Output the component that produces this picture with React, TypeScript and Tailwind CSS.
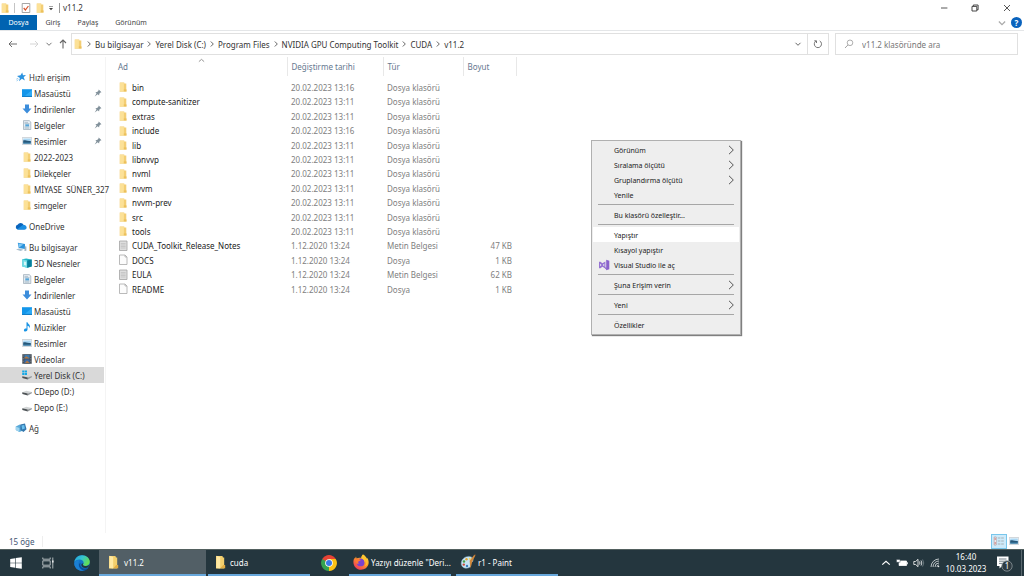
import React from "react";

type IconProps = { className?: string };

const Folder = ({ className = "h-2.5 w-2.5" }: IconProps) => (
  <svg viewBox="0 0 10 10" className={className} aria-hidden="true">
    <path d="M1.7.6h4.6v1H8.300v8H1.700z" fill="#f3ce74" />
    <path d="M2 .8h3.900v8.600H2z" fill="#fce197" />
    <path d="M5.800 7.400h2.700v2.200H5.800z" fill="#ecc05b" />
    <path d="M1.500 9.200h6.600v.4H1.500z" fill="#f5d98f" />
  </svg>
);

const BigFolder = ({ className = "h-[14px] w-3" }: IconProps) => (
  <svg viewBox="0 0 12 14" className={className} aria-hidden="true">
    <path d="M2 1h6.400l.6 1.400h1.200v11H2z" fill="#f3cf6d" />
    <path d="M2.600.7l3.600 1.200v11.600L2.200 13z" fill="#ffe9a3" />
    <path d="M9.200 10h2v3.200H6.400z" fill="#e3ae43" />
  </svg>
);

const TextFile = () => (
  <svg viewBox="0 0 10 12" className="h-3 w-2.5" aria-hidden="true">
    <path d="M1.500 1h7.500v9.500h-7.500z" fill="#dedede" stroke="#a3a3a3" strokeWidth=".8" />
    <path d="M2.800 3.500h4.800M2.800 5h4.800M2.800 6.500h4.800M2.800 8h4.800" stroke="#bdbdbd" strokeWidth=".7" />
  </svg>
);

const BlankFile = () => (
  <svg viewBox="0 0 10 12" className="h-3 w-2.5" aria-hidden="true">
    <path d="M1.500 1h5.500l2 2v7.500h-7.500z" fill="#fcfcfc" stroke="#a8a8a8" strokeWidth=".8" />
    <path d="M7 1v2h2" fill="none" stroke="#a8a8a8" strokeWidth=".7" />
  </svg>
);

const Star = () => (
  <svg viewBox="0 0 10 10" className="h-2.5 w-2.5" aria-hidden="true">
    <path d="M6.200.4l.8 2.800 3-.2-2.300 2.200 1.200 3.200-3-1.600L3 9.300l.9-3.400L1 3.900l3.500-.6z" fill="#2c93e0" />
    <path d="M.3 7.200l2-1M.7 9.200l1.600-1.800" stroke="#6bb6ea" strokeWidth=".7" />
  </svg>
);

const Desktop = () => (
  <svg viewBox="0 0 10 10" className="h-2.5 w-2.5" aria-hidden="true">
    <path d="M0 1.200h10v7.600H0z" fill="#1496ea" />
    <path d="M3 7.800L10 2v5.800z" fill="#2fabf5" />
    <path d="M0 8h10v.8H0z" fill="#0873bd" />
  </svg>
);

const Download = () => (
  <svg viewBox="0 0 10 10" className="h-2.5 w-2.5" aria-hidden="true">
    <path d="M3 .6h4v4h2.500L5 9.400.5 4.600H3z" fill="#3c8ddb" />
  </svg>
);

const Documents = () => (
  <svg viewBox="0 0 10 10" className="h-2.5 w-2.5" aria-hidden="true">
    <path d="M1.500.6h5.700L8.800 2v7.500H1.500z" fill="#e8eff4" stroke="#8a9ba7" strokeWidth=".6" />
    <path d="M2.500 2.400H6M2.500 3.600h5M2.500 7h4.800M2.500 8.200h4.800" stroke="#8fa8b8" strokeWidth=".6" />
    <path d="M3.300 4.300h3.800v2.100H3.300z" fill="#56a5d8" />
  </svg>
);

const Pictures = () => (
  <svg viewBox="0 0 10 10" className="h-2.5 w-2.5" aria-hidden="true">
    <path d="M.3 1.500h9.400v7H.3z" fill="#f7fafc" stroke="#a8b1b8" strokeWidth=".5" />
    <path d="M1.200 2.500h7.600v5H1.200z" fill="#a9d6f3" />
    <path d="M1.200 4.600c2-.8 3 .8 7.600.4v2.500H1.200z" fill="#275778" />
    <path d="M1.200 6.600h7.600v.9H1.200z" fill="#4189b5" />
  </svg>
);

const Cloud = () => (
  <svg viewBox="0 0 12 10" className="h-2.5 w-3" aria-hidden="true">
    <path d="M2.800 8.500A2.400 2.400 0 0 1 2.600 3.800 3.500 3.500 0 0 1 8.700 3.900a2.400 2.400 0 0 1 .8 4.600z" fill="#0a65bd" />
    <path d="M2.200 8.300l5.200-4c2-.8 4.300.5 4.200 2.400-.1 1-.8 1.800-2 1.800H2.900z" fill="#1b8fe3" />
  </svg>
);

const Computer = () => (
  <svg viewBox="0 0 12 10" className="h-2.5 w-3" aria-hidden="true">
    <path d="M2.800.8l7.200 1.300v5L3.700 6z" fill="#2b93dc" />
    <path d="M3.400 1.500l4.800.9-4 3.200z" fill="#80c8f4" />
    <path d="M1 7.400l3-.8 4.600 1.200-3 1.100z" fill="#a9bfce" />
    <path d="M9.800 4.200l1.600.3v4.300l-2 .3z" fill="#a0b4c2" />
  </svg>
);

const Cube = () => (
  <svg viewBox="0 0 10 10" className="h-2.5 w-2.5" aria-hidden="true">
    <path d="M.3 1.300L4.200.5l5.500 1v6.900L5.300 9.700.3 8.500z" fill="#24b7c7" />
    <path d="M.3 1.300l4.900 1.200v7.200L.3 8.500z" fill="#75dce5" />
    <path d="M5.200 2.500l4.500-1v6.900l-4.500 1.300z" fill="#087f9c" />
    <path d="M2 3.500l2.200.6v3.500L2 7z" fill="#d5f6f8" />
  </svg>
);

const Music = () => (
  <svg viewBox="0 0 10 10" className="h-2.5 w-2.5" aria-hidden="true">
    <path d="M4.500.3h1c.2 1.600 2.600 2 2.400 4.300 0 .8-.4 1.300-.7 1.700.3-1.700-.6-2.200-1.700-2.500v3.800c0 1.200-1 2-2.200 2S1.700 8.800 2 7.800c.3-1 1.400-1.500 2.500-1.200z" fill="#1994e5" />
  </svg>
);

const Videos = () => (
  <svg viewBox="0 0 10 10" className="h-2.5 w-2.5" aria-hidden="true">
    <path d="M.3.2h9.400v9.600H.3z" fill="#3c444c" />
    <path d="M2.300.8h5.400v3.700H2.300z" fill="#3e79ad" />
    <path d="M2.300 5.300h5.400v3.800H2.300z" fill="#3a6ba8" />
    <path d="M2.300 4l2-1.700 3.400 2.200H2.300zM3 9l2-2.500L7.700 9z" fill="#b5763d" />
    <path d="M1.100.8v8.600M8.900.8v8.600" stroke="#bcc4ca" strokeWidth=".7" strokeDasharray=".8 .8" />
  </svg>
);

const Drive = ({ system = false }: { system?: boolean }) => (
  <svg viewBox="0 0 10 10" className="h-2.5 w-2.5" aria-hidden="true">
    <path d="M.3 6.200l4-1.500 5.500 1.200-4 1.700z" fill="#d2d5d6" />
    <path d="M.3 6.200l5.500 1.400v1.900L.3 8z" fill="#4d5255" />
    <path d="M5.800 7.600l4-1.700v1.400l-4 2.200z" fill="#94999c" />
    {system && <path d="M.2.4h2.200v2H.2zM2.800.4H5v2H2.800zM.2 2.900h2.200v2H.2zM2.800 2.900H5v2H2.800z" fill="#16a8e5" />}
  </svg>
);

const Network = () => (
  <svg viewBox="0 0 12 10" className="h-2.5 w-3" aria-hidden="true">
    <path d="M.8 3.500l4-2 2.800 2.200v4L4.400 9 .8 7z" fill="#58a9d9" />
    <path d="M5.300 1.600L10 .4l1.500 5.800-3 2.900-3-2z" fill="#3478ae" />
    <path d="M6.500 2.400L9.200 2l.7 3.600-2.700.9z" fill="#69c0ef" />
    <path d="M.8 3.500L4.400 5v4L.8 7z" fill="#9ed4ef" />
  </svg>
);

const Pin = () => (
  <svg viewBox="0 0 8 8" className="h-2 w-2 shrink-0" aria-hidden="true">
    <path d="M4.700.5l2.800 2.800-1 .3-1.200 1.200-.2 1.700-1.400-1.200L.7 7.500l1.800-3-1.100-1.200 1.700-.3 1.300-1.300z" fill="#82919b" />
  </svg>
);

const Chevron = ({ className = "h-2 w-2", d = "M2.800 1.500L5.300 4 2.800 6.500" }: IconProps & { d?: string }) => (
  <svg viewBox="0 0 8 8" className={className} aria-hidden="true">
    <path d={d} fill="none" stroke="currentColor" strokeWidth="1" />
  </svg>
);
const DOWN = "M1.500 2.800L4 5.300l2.500-2.500";
const UP = "M1 5.300l3-2.600 3 2.600";

const VisualStudio = () => (
  <svg viewBox="0 0 12 12" className="h-3 w-3" aria-hidden="true">
    <path d="M8.200.8L11.300 1.800v8.400l-3.100 1z" fill="#8a62cc" />
    <path d="M1 2.800h1.400l2 1.500L7.400 2.400v7.200L4.400 7.700l-2 1.500H1z" fill="#9673d3" />
    <path d="M6.200 8.600h2.500v2.400z" fill="#8a62cc" />
    <path d="M2.100 4.700v2.600L3.500 6zM6.300 4.600v2.800L4.900 6z" fill="#eeeeee" />
  </svg>
);

type Place = { name: string; icon: React.ReactNode; pinned?: boolean; selected?: boolean };
type Section = { head: Place; items: Place[] };

const sections: Section[] = [
  {
    head: { name: "Hızlı erişim", icon: <Star /> },
    items: [
      { name: "Masaüstü", icon: <Desktop />, pinned: true },
      { name: "İndirilenler", icon: <Download />, pinned: true },
      { name: "Belgeler", icon: <Documents />, pinned: true },
      { name: "Resimler", icon: <Pictures />, pinned: true },
      { name: "2022-2023", icon: <Folder /> },
      { name: "Dilekçeler", icon: <Folder /> },
      { name: "MİYASE  SÜNER_327", icon: <Folder /> },
      { name: "simgeler", icon: <Folder /> },
    ],
  },
  { head: { name: "OneDrive", icon: <Cloud /> }, items: [] },
  {
    head: { name: "Bu bilgisayar", icon: <Computer /> },
    items: [
      { name: "3D Nesneler", icon: <Cube /> },
      { name: "Belgeler", icon: <Documents /> },
      { name: "İndirilenler", icon: <Download /> },
      { name: "Masaüstü", icon: <Desktop /> },
      { name: "Müzikler", icon: <Music /> },
      { name: "Resimler", icon: <Pictures /> },
      { name: "Videolar", icon: <Videos /> },
      { name: "Yerel Disk (C:)", icon: <Drive system />, selected: true },
      { name: "CDepo (D:)", icon: <Drive /> },
      { name: "Depo (E:)", icon: <Drive /> },
    ],
  },
  { head: { name: "Ağ", icon: <Network /> }, items: [] },
];

type Kind = "folder" | "text" | "blank";
type Entry = { name: string; date: string; type: string; size: string; kind: Kind };

const folder = (name: string, time = "13:11"): Entry => ({
  name,
  date: `20.02.2023 ${time}`,
  type: "Dosya klasörü",
  size: "",
  kind: "folder",
});

const entries: Entry[] = [
  folder("bin", "13:16"),
  folder("compute-sanitizer"),
  folder("extras"),
  folder("include", "13:16"),
  folder("lib"),
  folder("libnvvp"),
  folder("nvml"),
  folder("nvvm"),
  folder("nvvm-prev"),
  folder("src"),
  folder("tools"),
  { name: "CUDA_Toolkit_Release_Notes", date: "1.12.2020 13:24", type: "Metin Belgesi", size: "47 KB", kind: "text" },
  { name: "DOCS", date: "1.12.2020 13:24", type: "Dosya", size: "1 KB", kind: "blank" },
  { name: "EULA", date: "1.12.2020 13:24", type: "Metin Belgesi", size: "62 KB", kind: "text" },
  { name: "README", date: "1.12.2020 13:24", type: "Dosya", size: "1 KB", kind: "blank" },
];

const kindIcon: Record<Kind, React.ReactNode> = {
  folder: <Folder />,
  text: <TextFile />,
  blank: <BlankFile />,
};

const crumbs = ["Bu bilgisayar", "Yerel Disk (C:)", "Program Files", "NVIDIA GPU Computing Toolkit", "CUDA", "v11.2"];

type MenuItem = { label: string; sub?: boolean; active?: boolean; icon?: React.ReactNode };
const menuGroups: MenuItem[][] = [
  [
    { label: "Görünüm", sub: true },
    { label: "Sıralama ölçütü", sub: true },
    { label: "Gruplandırma ölçütü", sub: true },
    { label: "Yenile" },
  ],
  [{ label: "Bu klasörü özelleştir..." }],
  [
    { label: "Yapıştır", active: true },
    { label: "Kısayol yapıştır" },
    { label: "Visual Studio ile aç", icon: <VisualStudio /> },
  ],
  [{ label: "Şuna Erişim verin", sub: true }],
  [{ label: "Yeni", sub: true }],
  [{ label: "Özellikler" }],
];

function TitleBar() {
  return (
    <header className="flex h-[15px] items-center text-[#333]">
      <Folder />
      <span className="mx-1 h-2.5 w-px bg-[#c4c4c4]" />
      <button aria-label="Özellikler" className="ml-0.5">
        <svg viewBox="0 0 10 10" className="h-2.5 w-2.5" aria-hidden="true">
          <path d="M1.200.5h7.600v9H1.200z" fill="#fff" stroke="#8f8f8f" strokeWidth=".8" />
          <path d="M2.700 5l1.700 2 3-4" fill="none" stroke="#d9532c" strokeWidth="1.2" />
        </svg>
      </button>
      <button aria-label="Yeni klasör" className="ml-1">
        <Folder />
      </button>
      <button aria-label="Hızlı erişim araç çubuğu" className="ml-0.5">
        <svg viewBox="0 0 8 8" className="h-2 w-2" aria-hidden="true">
          <path d="M2 2.400h4v.7H2zM2 4h4L4 6.200z" fill="#444" />
        </svg>
      </button>
      <span className="mr-[3px] ml-1 h-2.5 w-px bg-[#9a9a9a]" />
      <h1>v11.2</h1>
      <div className="ml-auto flex items-center">
        <button aria-label="Simge durumuna küçült" className="flex w-8 justify-center">
          <svg viewBox="0 0 8 8" className="h-2 w-2"><path d="M1 4h6.400" stroke="#444" strokeWidth=".9" /></svg>
        </button>
        <button aria-label="Önceki boyut" className="flex w-[30px] justify-center">
          <svg viewBox="0 0 8 8" className="h-2 w-2">
            <path d="M1 2.400h4.800V7H1zM2.300 2.200V1h4.800v4.800H6" fill="none" stroke="#333" strokeWidth=".9" />
          </svg>
        </button>
        <button aria-label="Kapat" className="flex w-[34px] justify-center">
          <svg viewBox="0 0 8 8" className="h-2 w-2"><path d="M1 1l6 6M7 1L1 7" stroke="#444" strokeWidth=".9" /></svg>
        </button>
      </div>
    </header>
  );
}

function Ribbon() {
  return (
    <nav className="flex h-4 items-stretch border-b border-[#e4e6e8] text-[7px] text-[#444]">
      <button className="w-[37px] bg-[#0063b1] text-white">Dosya</button>
      <button className="w-8">Giriş</button>
      <button className="w-[38px]">Paylaş</button>
      <button className="w-12">Görünüm</button>
      <div className="ml-auto flex items-center gap-1 pr-0.5">
        <button aria-label="Şeridi genişlet" className="text-[#aaa]">
          <Chevron d={DOWN} className="h-2.5 w-2.5" />
        </button>
        <button aria-label="Yardım" className="flex h-[11px] w-[11px] items-center justify-center rounded-full bg-[#0a63bd] text-[8px] leading-none font-bold text-white">
          ?
        </button>
      </div>
    </nav>
  );
}

function AddressRow() {
  return (
    <div className="flex h-[26px] items-center pr-[6px] pl-2">
      <div className="flex w-[63px] items-center">
        <button aria-label="Geri" className="w-[21px]">
          <svg viewBox="0 0 10 10" className="h-2.5 w-2.5"><path d="M9 5H1M4 2L1 5l3 3" fill="none" stroke="#606060" strokeWidth=".9" /></svg>
        </button>
        <button aria-label="İleri" className="w-4">
          <svg viewBox="0 0 10 10" className="h-2.5 w-2.5"><path d="M1 5h8M6 2l3 3-3 3" fill="none" stroke="#d0d0d0" strokeWidth=".9" /></svg>
        </button>
        <button aria-label="Son konumlar" className="w-[13px] text-[#777]">
          <Chevron d={DOWN} />
        </button>
        <button aria-label="Yukarı">
          <svg viewBox="0 0 10 10" className="h-2.5 w-2.5"><path d="M5 9.500V1M2 4l3-3 3 3" fill="none" stroke="#666" strokeWidth="1.1" /></svg>
        </button>
      </div>
      <div className="flex h-[22px] flex-1 items-center border border-[#e0e0e0] pl-px text-[#333]">
        <Folder />
        {crumbs.map((crumb) => (
          <React.Fragment key={crumb}>
            <span className="flex w-3 justify-center text-[#666]">
              <Chevron />
            </span>
            <a href="#" className="whitespace-nowrap">{crumb}</a>
          </React.Fragment>
        ))}
        <button aria-label="Önceki konumlar" className="mr-[5px] ml-auto text-[#666]">
          <Chevron d={DOWN} />
        </button>
        <button aria-label="Yenile" className="flex h-full w-[21px] items-center justify-center border-l border-[#e0e0e0]">
          <svg viewBox="0 0 10 10" className="h-2.5 w-2.5">
            <path d="M6.700 1.900A3.600 3.600 0 1 1 2.800 2.100M1.300 1.800h2.200V4" fill="none" stroke="#666" strokeWidth=".9" />
          </svg>
        </button>
      </div>
      <label className="ml-[6px] flex h-[22px] w-[183px] items-center border border-[#e0e0e0] pl-2">
        <svg viewBox="0 0 10 10" className="mr-2 h-2.5 w-2.5 shrink-0" aria-hidden="true">
          <circle cx="6" cy="3.800" r="2.800" fill="none" stroke="#999" strokeWidth=".8" />
          <path d="M4 5.900L1 9" stroke="#999" strokeWidth=".9" />
        </svg>
        <input
          aria-label="v11.2 klasöründe ara"
          placeholder="v11.2 klasöründe ara"
          className="min-w-0 flex-1 bg-transparent outline-none placeholder:text-[#777]"
        />
      </label>
    </div>
  );
}

function PlaceLink({ place, head = false }: { place: Place; head?: boolean }) {
  return (
    <a
      href="#"
      className={`flex h-4 items-center whitespace-pre ${head ? "pl-[15px]" : "pl-[22px]"} ${
        place.selected ? "bg-[#d9d9d9]" : ""
      }`}
    >
      <span className={`mr-0.5 flex shrink-0 justify-center ${head ? "w-3" : "w-2.5"}`}>{place.icon}</span>
      <span>{place.name}</span>
      {place.pinned && (
        <span className="ml-auto pr-0.5">
          <Pin />
        </span>
      )}
    </a>
  );
}

function Sidebar() {
  return (
    <aside className="flex w-[106px] shrink-0 flex-col gap-[5px] border-r border-[#f4f4f4] pt-3 pr-px text-[#333]">
      {sections.map((section) => (
        <div key={section.head.name}>
          <PlaceLink place={section.head} head />
          {section.items.map((place) => (
            <PlaceLink key={place.name} place={place} />
          ))}
        </div>
      ))}
    </aside>
  );
}

function FileTable() {
  const th = "border-r border-[#e8e8e8] p-0 pl-1 text-left font-normal";
  return (
    <main className="flex-1">
      <table className="w-[410px] table-fixed border-collapse">
        <colgroup>
          <col className="w-[181px]" />
          <col className="w-24" />
          <col className="w-20" />
          <col className="w-[53px]" />
        </colgroup>
        <thead className="text-[#66788f]">
          <tr className="h-[19px]">
            <th className="border-r border-[#e8e8e8] p-0 text-left font-normal">
              <div className="flex items-center pl-3">
                <span className="w-20">Ad</span>
                <span className="-mt-3 text-[#888]">
                  <Chevron d={UP} className="h-[7px] w-[7px]" />
                </span>
              </div>
            </th>
            <th className={th}>Değiştirme tarihi</th>
            <th className={th}>Tür</th>
            <th className={th}>Boyut</th>
          </tr>
        </thead>
        <tbody className="text-[#808080]">
          <tr className="h-1" aria-hidden="true" />
          {entries.map((entry) => (
            <tr key={entry.name} className="h-[14px] [&:nth-child(5n)]:h-[15px] [&:nth-child(5n+3)]:h-[15px]">
              <td className="p-0 pl-3 text-[#222]">
                <div className="flex items-center gap-1">
                  {kindIcon[entry.kind]}
                  <span className="whitespace-nowrap">{entry.name}</span>
                </div>
              </td>
              <td className="p-0 pl-1">{entry.date}</td>
              <td className="p-0 pl-1">{entry.type}</td>
              <td className="p-0 pr-1 text-right">{entry.size}</td>
            </tr>
          ))}
        </tbody>
      </table>
    </main>
  );
}

function ContextMenu() {
  return (
    <div
      role="menu"
      className="absolute top-[140px] left-[591px] w-[150px] border border-[#b0b0b0] bg-[#eeeeee] px-px pt-px pb-0.5 text-[7px] text-[#222] shadow-[1px_1px_1px_rgba(0,0,0,0.5)]"
    >
      {menuGroups.map((group, index) => (
        <div key={group[0].label}>
          {index > 0 && (
            <div role="separator" className="flex h-[5px] items-center px-[5px]">
              <span className="h-px w-full bg-[#a6a6a6]" />
            </div>
          )}
          {group.map((item) => (
            <button
              key={item.label}
              role="menuitem"
              className={`flex h-[15px] w-full items-center pr-1 text-left ${item.active ? "bg-white" : ""}`}
            >
              <span className="flex w-[21px] justify-center">{item.icon}</span>
              <span className="pt-px">{item.label}</span>
              {item.sub && (
                <span className="ml-auto">
                  <svg viewBox="0 0 8 10" className="h-2.5 w-2" aria-hidden="true">
                    <path d="M2 .8L6.300 5 2 9.200" fill="none" stroke="#444" strokeWidth=".9" />
                  </svg>
                </span>
              )}
            </button>
          ))}
        </div>
      ))}
    </div>
  );
}

function StatusBar() {
  return (
    <footer className="flex h-4 items-center pl-[9px] text-[#3f5572]">
      <span className="border-r border-[#eee] pr-[7px]">15 öğe</span>
      <button aria-label="Ayrıntılar" className="ml-auto flex h-[15px] w-4 items-center justify-center border border-[#78c6ec] bg-[#cdeafa]">
        <svg viewBox="0 0 12 10" className="h-2.5 w-3">
          <path d="M1.200 1h2v8h-2z" fill="#fff" stroke="#a38585" strokeWidth=".6" />
          <path d="M2.200 2v2M2.200 6v2" stroke="#c66" strokeWidth=".8" />
          <path d="M4.800 2h2.600M8.200 2h2.600M4.800 5h2.600M8.200 5h2.600M4.800 8h2.600M8.200 8h2.600" stroke="#999" strokeWidth=".7" />
        </svg>
      </button>
      <button aria-label="Büyük simgeler" className="mr-[5px] ml-0.5">
        <Pictures />
      </button>
    </footer>
  );
}

const Edge = () => (
  <svg viewBox="0 0 16 16" className="h-4 w-4" aria-hidden="true">
    <defs>
      <linearGradient id="edgeTop" x1="0" y1="0" x2="1" y2=".5">
        <stop offset="0" stopColor="#229fe0" />
        <stop offset=".5" stopColor="#35c4cf" />
        <stop offset="1" stopColor="#62dd55" />
      </linearGradient>
    </defs>
    <circle cx="8" cy="8" r="7.800" fill="#1274c9" />
    <path d="M.3 7.200C.8 3 4 .2 8 .2c4.700 0 7.800 3.200 7.800 6.600 0 2.600-1.900 4.100-4.100 4.100-1.900 0-2.800-.7-2.700-1.200.1-.4.700-.7.700-1.900 0-1.700-1.700-3.200-4.300-3.200C3 4.600 1 5.600.3 7.200z" fill="url(#edgeTop)" />
    <path d="M5.700 5.600C3.800 7 4 11.200 6.600 13.600c1.200 1.200 2.700 1.900 3.800 1.900C6 17 .8 13.700.3 9c.1-2.700 2.500-4.300 5.400-3.400z" fill="#1b7fd3" />
    <path d="M6.700 7.700c-1.400 3 .9 5.800 4 5.800 1.500 0 2.700-.5 3.600-1.100-1 1.600-2.400 2.700-4 3.100C6.800 14.900 4.600 12 5 9.500c.2-1 .9-1.600 1.700-1.800z" fill="#0b4d99" />
    <path d="M9.500 8.600c-.7.700-.9 1.300-.1 1.800 1.700 1.100 4.400.8 6-.9l-.9 2.600c-2.900 1.900-6.900.8-7.200-2-.1-1.200.9-2 2.200-1.500z" fill="#24363e" />
  </svg>
);

const Chrome = () => (
  <svg viewBox="0 0 16 16" className="h-4 w-4" aria-hidden="true">
    <path d="M8 8L1.200 4A7.900 7.900 0 0 1 14.800 4z" fill="#e84335" />
    <path d="M8 8l6.800-4A7.900 7.900 0 0 1 8 15.900z" fill="#fbc116" />
    <path d="M8 8v7.900A7.900 7.900 0 0 1 1.200 4z" fill="#34a251" />
    <path d="M8 4h6.800L11.400 10z" fill="#fbc116" />
    <path d="M1.200 4h6.800L4.600 10z" fill="#34a251" />
    <path d="M1.300 4h13.500H8L4.500 6z" fill="#e84335" />
    <path d="M11.500 10L8 15.900 8 11.500z" fill="#fbc116" />
    <circle cx="8" cy="8" r="3.800" fill="#fff" />
    <circle cx="8" cy="8" r="3" fill="#3979e8" />
  </svg>
);

const Firefox = () => (
  <svg viewBox="0 0 16 16" className="h-4 w-4" aria-hidden="true">
    <defs>
      <linearGradient id="fox" x1=".9" y1="0" x2=".2" y2="1">
        <stop offset="0" stopColor="#ffe345" />
        <stop offset=".45" stopColor="#ff9b26" />
        <stop offset="1" stopColor="#f0305f" />
      </linearGradient>
    </defs>
    <path d="M10 .4c2 1 3.300 2.700 4 4.300l.5-.8c1 2 1.500 4.200 1 6.200-.8 3.400-3.800 5.700-7.500 5.700C3.700 15.800.4 12.400.4 8c0-1.800.6-3.200 1.200-4.200l.3 1L3 2.600l.6 1.800C5.500 3.400 7 3.600 8.300 4c.2-1.500.7-2.700 1.700-3.600z" fill="url(#fox)" />
    <circle cx="7.600" cy="8.400" r="3.900" fill="#7b43d0" />
    <path d="M3.600 4.600c1.500 0 3 .7 4.300 1.500-.8 1-2 .9-2.500 1.500-.5.700-.2 1.500.6 2-1.600.3-3.200-.4-3.400-2.200z" fill="#ff7a33" />
    <path d="M8.300 4c1 .9 3.200 1.700 3.700 4.700.6-1.200.4-2.500-.1-3.600 2.300 2 1.700 5.900-.6 7.300 4.200-1 4.200-6.300 1.200-8.600L10 .4C8.500 1.600 8.300 4 8.300 4z" fill="#ffc42e" />
  </svg>
);

const Paint = () => (
  <svg viewBox="0 0 16 16" className="h-4 w-4" aria-hidden="true">
    <path d="M1.200 9.200C1.400 5 5.300 2.200 9 2.400c4 .2 5 3.600 3.400 5.400-1 1.100-2 .8-2.200 2 .1 1.400 1 2.700-.8 3.700C5.700 15.300 1 13.500 1.200 9.200z" fill="#c7e4f4" stroke="#7faac0" strokeWidth=".5" />
    <circle cx="4" cy="7.500" r="1.200" fill="#4a9f49" />
    <circle cx="6.500" cy="5.200" r="1.200" fill="#e0a537" />
    <circle cx="3.800" cy="10.600" r="1.200" fill="#cc493a" />
    <circle cx="7" cy="12" r="1.200" fill="#397cc0" />
    <circle cx="9.800" cy="4.700" r="1" fill="#f0dc56" />
    <path d="M10.500 14.500L9.600 6.700l4.700-6 1.100.8-3.100 5.900z" fill="#d1893d" />
    <path d="M14.200.7l1.500-.5-.3 1.800z" fill="#78502b" />
  </svg>
);

type Task = { label: string; icon: React.ReactNode; active?: boolean };

function TaskButton({ label, icon, active = false }: Task) {
  return (
    <button
      className={`flex shrink-0 items-center border-b-2 border-[#68a8dc] pl-1 text-left ${
        active ? "w-[107px] gap-[5px] bg-[#525f66]" : "w-[102px] gap-0.5"
      }`}
    >
      <span className={`flex shrink-0 ${active ? "w-4 justify-end" : "w-4 justify-center"}`}>{icon}</span>
      <span className="whitespace-nowrap">{label}</span>
    </button>
  );
}

function Taskbar() {
  return (
    <div className="flex h-[27px] shrink-0 items-stretch border-t border-[#52605f] bg-[#24363e] text-white">
      <button aria-label="Başlat" className="flex w-8 items-center justify-center">
        <svg viewBox="0 0 12 12" className="h-3 w-3">
          <path d="M.2 1.900l5-.7v4.500h-5zM5.800 1.100L11.800.2v5.500h-6zM.2 6.300h5v4.500l-5-.7zM5.800 6.300h6v5.500l-6-.9z" fill="#fff" />
        </svg>
      </button>
      <button aria-label="Görev görünümü" className="flex w-8 items-center justify-center">
        <svg viewBox="0 0 12 12" className="h-3 w-3">
          <path d="M.8.500v1.700h7.400V.5M.8 11.500V9.800h7.400v1.700M.8 3.800h7.400v4.400H.8zM10.800.5v11" fill="none" stroke="#d4d9db" strokeWidth=".8" />
          <path d="M10 3.500h1.600v2H10z" fill="#e6e9ea" />
        </svg>
      </button>
      <button aria-label="Microsoft Edge" className="flex w-[35px] items-center justify-center">
        <Edge />
      </button>
      <TaskButton label="v11.2" icon={<BigFolder />} active />
      <div className="ml-0.5 flex">
        <TaskButton label="cuda" icon={<BigFolder />} />
      </div>
      <button aria-label="Google Chrome" className="flex w-[39px] items-center justify-center pr-px">
        <Chrome />
      </button>
      <div className="flex gap-[5px]">
        <TaskButton label={'Yazıyı düzenle "Deri...'} icon={<Firefox />} />
        <TaskButton label="r1 - Paint" icon={<Paint />} />
      </div>
      <div className="ml-auto flex items-center">
        <button aria-label="Gizli simgeleri göster" className="mr-[5px]">
          <Chevron d={UP} className="h-2.5 w-2.5" />
        </button>
        <button aria-label="Pil" className="mr-[5px]">
          <svg viewBox="0 0 12 10" className="h-2.5 w-3">
            <path d="M3 3h7.500v4.500H3z" fill="#fff" stroke="#fff" strokeWidth=".8" />
            <path d="M11 4.200h.8v2H11z" fill="#fff" />
            <path d="M.5 1.500h3.600v2.800H.5zM2.300 4v3.500" fill="#fff" stroke="#24363e" strokeWidth=".4" />
          </svg>
        </button>
        <button aria-label="Ses" className="mr-[5px]">
          <svg viewBox="0 0 12 10" className="h-2.5 w-3">
            <path d="M.8 3.500h1.800L5 1.300v7.400L2.600 6.500H.8zM6.500 3.500q1 1.500 0 3M8 2.500q1.700 2.500 0 5" fill="none" stroke="#fff" strokeWidth=".8" />
            <path d="M9.600 1.500q2.300 3.500 0 7" fill="none" stroke="#829097" strokeWidth=".7" />
          </svg>
        </button>
        <button aria-label="Kablosuz ağ" className="mr-[5px]">
          <svg viewBox="0 0 10 10" className="h-2.5 w-2.5">
            <path d="M1 9A8 8 0 0 1 9 1M3 9A6 6 0 0 1 9 3M5 9A4 4 0 0 1 9 5M7 9A2 2 0 0 1 9 7" fill="none" stroke="#dfe4e6" strokeWidth=".8" />
            <circle cx="8.600" cy="8.600" r=".7" fill="#fff" />
          </svg>
        </button>
        <button className="w-[42px] text-center leading-3 whitespace-nowrap">
          <span className="block">16:40</span>
          <span className="block">10.03.2023</span>
        </button>
        <button aria-label="Bildirimler" className="mr-2 ml-2">
          <svg viewBox="0 0 18 18" className="h-[18px] w-[18px]">
            <path d="M2 2.500h11.500v9.500H7L4.500 14.500V12H2z" fill="#fff" />
            <path d="M4 5h7.500M4 7.200h7.500M4 9.400h5" stroke="#52616a" strokeWidth=".8" />
            <circle cx="12" cy="12" r="5.200" fill="#2f3c43" stroke="#8c979c" strokeWidth=".8" />
            <text x="12" y="15" textAnchor="middle" fontSize="8" fill="#fff">1</text>
          </svg>
        </button>
        <span className="mr-0.5 h-full w-px bg-[#5a686f]" />
      </div>
    </div>
  );
}

export default function App() {
  return (
    <div className="relative flex min-h-screen flex-col bg-white font-['Noto_Sans','Open_Sans',sans-serif] text-[8px] leading-[11px]">
      <TitleBar />
      <Ribbon />
      <AddressRow />
      <div className="flex flex-1">
        <Sidebar />
        <FileTable />
      </div>
      <StatusBar />
      <Taskbar />
      <ContextMenu />
    </div>
  );
}
